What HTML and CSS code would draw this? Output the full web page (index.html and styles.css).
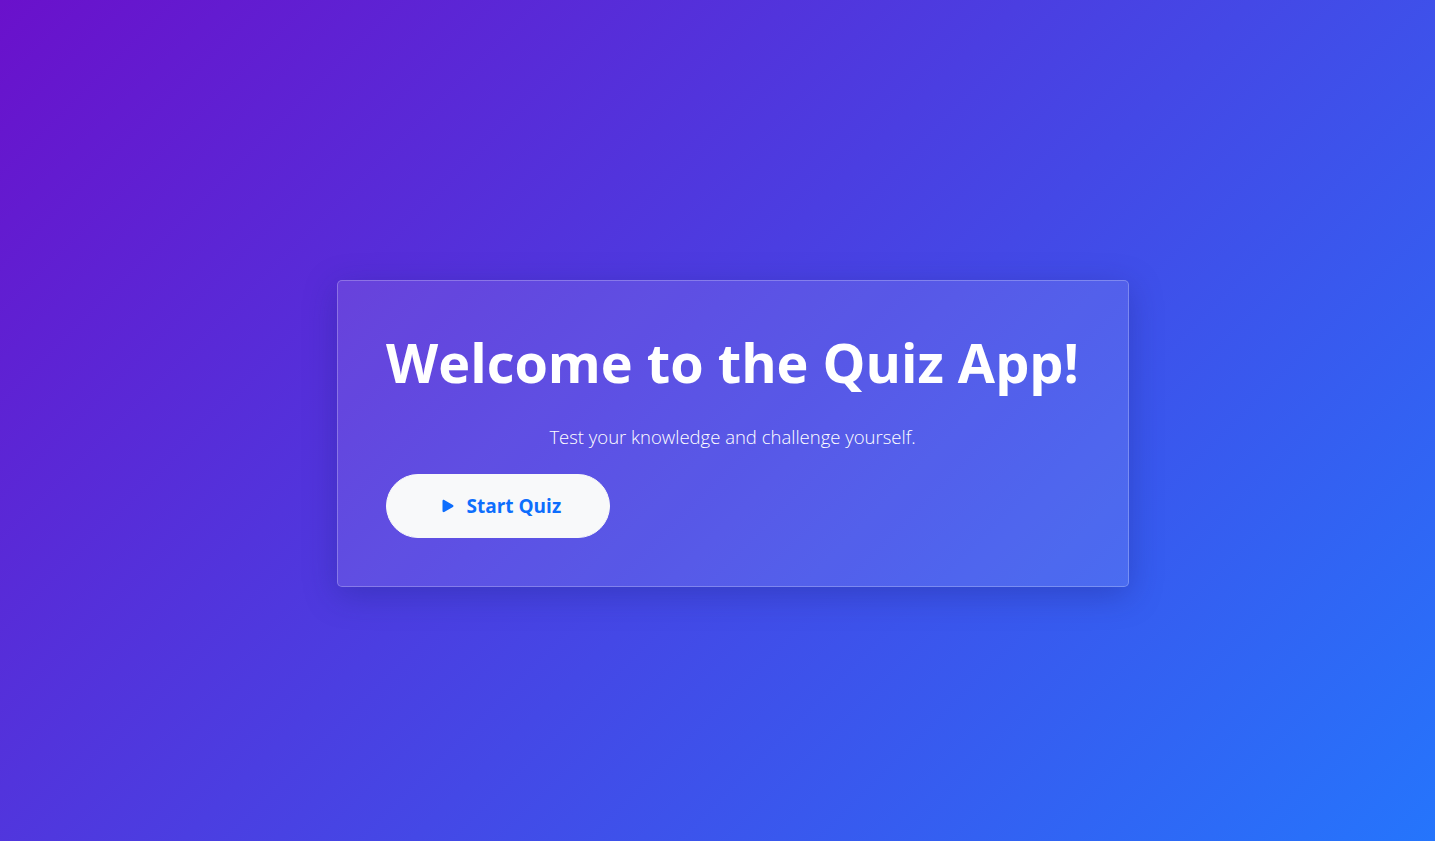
FILE: index.html
```html
<!DOCTYPE html>
<html lang="en">
<head>
<meta charset="utf-8">
<title>Quiz App</title>
<link rel="stylesheet" href="styles.css">
</head>
<body>
<main class="page">
  <section class="card">
    <h1 class="title">Welcome to the Quiz App!</h1>
    <p class="lead">Test your knowledge and challenge yourself.</p>
    <div class="actions">
      <button class="btn-start" type="button">
        <svg class="icon" viewBox="0 0 16 16" width="22" height="22" aria-hidden="true"><path fill="currentColor" d="m11.596 8.697-6.363 3.692c-.54.313-1.233-.066-1.233-.697V4.308c0-.63.692-1.01 1.233-.696l6.363 3.692a.802.802 0 0 1 0 1.393"/></svg>
        <span>Start Quiz</span>
      </button>
    </div>
  </section>
</main>
</body>
</html>
```

FILE: styles.css
```css
* { box-sizing: border-box; }
html, body { margin: 0; padding: 0; }
body {
  font-family: "Open Sans", "Noto Sans", sans-serif;
  color: #fff;
  background: linear-gradient(135deg, #6a11cb 0%, #2575fc 100%);
  min-height: 100vh;
}
.page {
  min-height: 100vh;
  display: flex;
  align-items: center;
  justify-content: center;
  padding: 26px 0 0 30px;
}
.card {
  width: 792px;
  padding: 48px;
  background: rgba(255, 255, 255, 0.1);
  border: 1px solid rgba(255, 255, 255, 0.25);
  border-radius: 5px;
  box-shadow: 0 8px 32px rgba(31, 38, 135, 0.37);
  text-align: center;
}
.title {
  margin: 0 0 26px;
  font-size: 54px;
  line-height: 67px;
  font-weight: 700;
  letter-spacing: 0;
  white-space: nowrap;
}
.lead {
  margin: 0 0 22px;
  font-size: 18.5px;
  line-height: 30px;
  font-weight: 300;
}
.actions { text-align: left; }
.btn-start {
  display: inline-flex;
  align-items: center;
  gap: 8px;
  height: 64px;
  padding: 0 48px 0 50px;
  border: 1px solid #f8f9fa;
  border-radius: 32px;
  background: #f8f9fa;
  color: #0d6efd;
  font-family: inherit;
  font-size: 19px;
  font-weight: 700;
  cursor: pointer;
}
.icon { display: block; }
```
